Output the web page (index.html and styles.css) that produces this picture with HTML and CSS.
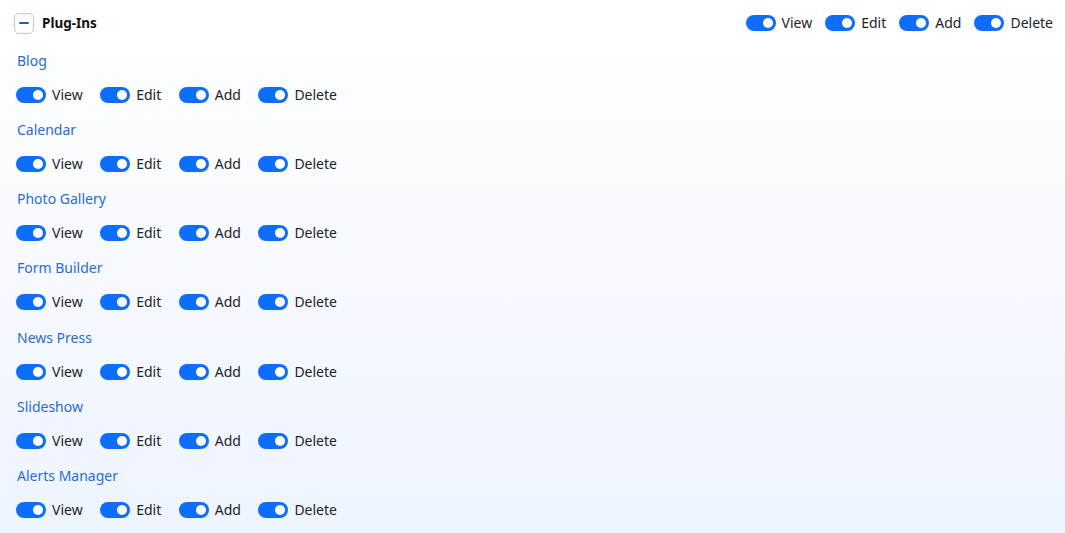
FILE: index.html
```html
<!DOCTYPE html>
<html>
<head>
<meta charset="utf-8">
<link rel="stylesheet" href="styles.css">
</head>
<body>
<div class="panel">
  <div class="header">
    <div class="head-left">
      <span class="collapse"><span class="minus"></span></span>
      <span class="head-title">Plug-Ins</span>
    </div>
    <div class="perms perms-head">
      <label class="perm"><span class="switch"></span><span>View</span></label>
      <label class="perm"><span class="switch"></span><span>Edit</span></label>
      <label class="perm"><span class="switch"></span><span>Add</span></label>
      <label class="perm"><span class="switch"></span><span>Delete</span></label>
    </div>
  </div>
  <div class="list">
    <div class="item">
      <div class="item-title">Blog</div>
      <div class="perms">
        <label class="perm"><span class="switch"></span><span>View</span></label>
        <label class="perm"><span class="switch"></span><span>Edit</span></label>
        <label class="perm"><span class="switch"></span><span>Add</span></label>
        <label class="perm"><span class="switch"></span><span>Delete</span></label>
      </div>
    </div>
    <div class="item">
      <div class="item-title">Calendar</div>
      <div class="perms">
        <label class="perm"><span class="switch"></span><span>View</span></label>
        <label class="perm"><span class="switch"></span><span>Edit</span></label>
        <label class="perm"><span class="switch"></span><span>Add</span></label>
        <label class="perm"><span class="switch"></span><span>Delete</span></label>
      </div>
    </div>
    <div class="item">
      <div class="item-title">Photo Gallery</div>
      <div class="perms">
        <label class="perm"><span class="switch"></span><span>View</span></label>
        <label class="perm"><span class="switch"></span><span>Edit</span></label>
        <label class="perm"><span class="switch"></span><span>Add</span></label>
        <label class="perm"><span class="switch"></span><span>Delete</span></label>
      </div>
    </div>
    <div class="item">
      <div class="item-title">Form Builder</div>
      <div class="perms">
        <label class="perm"><span class="switch"></span><span>View</span></label>
        <label class="perm"><span class="switch"></span><span>Edit</span></label>
        <label class="perm"><span class="switch"></span><span>Add</span></label>
        <label class="perm"><span class="switch"></span><span>Delete</span></label>
      </div>
    </div>
    <div class="item">
      <div class="item-title">News Press</div>
      <div class="perms">
        <label class="perm"><span class="switch"></span><span>View</span></label>
        <label class="perm"><span class="switch"></span><span>Edit</span></label>
        <label class="perm"><span class="switch"></span><span>Add</span></label>
        <label class="perm"><span class="switch"></span><span>Delete</span></label>
      </div>
    </div>
    <div class="item">
      <div class="item-title">Slideshow</div>
      <div class="perms">
        <label class="perm"><span class="switch"></span><span>View</span></label>
        <label class="perm"><span class="switch"></span><span>Edit</span></label>
        <label class="perm"><span class="switch"></span><span>Add</span></label>
        <label class="perm"><span class="switch"></span><span>Delete</span></label>
      </div>
    </div>
    <div class="item">
      <div class="item-title">Alerts Manager</div>
      <div class="perms">
        <label class="perm"><span class="switch"></span><span>View</span></label>
        <label class="perm"><span class="switch"></span><span>Edit</span></label>
        <label class="perm"><span class="switch"></span><span>Add</span></label>
        <label class="perm"><span class="switch"></span><span>Delete</span></label>
      </div>
    </div>
  </div>
</div>
</body>
</html>
```
FILE: styles.css
```css
html, body {
  margin: 0;
  padding: 0;
}
body {
  width: 1065px;
  height: 533px;
  overflow: hidden;
  font-family: "Noto Sans", "Open Sans", sans-serif;
  font-size: 14px;
  color: #212529;
  background: linear-gradient(180deg, #ffffff 0%, #eef4fe 100%);
}
.panel {
  padding: 13px 12px 0 14px;
}
.header {
  display: flex;
  justify-content: space-between;
  align-items: center;
  height: 20px;
}
.head-left {
  display: flex;
  align-items: center;
  gap: 8px;
}
.collapse {
  box-sizing: border-box;
  width: 20px;
  height: 21px;
  border: 1px solid #b9cbe9;
  border-radius: 5px;
  display: flex;
  align-items: center;
  justify-content: center;
  background: #fff;
}
.minus {
  width: 10px;
  height: 2px;
  background: #1d5bc8;
  border-radius: 1px;
}
.head-title {
  font-weight: 700;
  font-size: 13.5px;
  color: #111;
}
.perms {
  display: flex;
  align-items: center;
  height: 20px;
}
.perm {
  display: flex;
  align-items: center;
  gap: 6px;
  margin-right: 17.5px;
  line-height: 20px;
}
.perms-head .perm {
  margin-right: 0;
  margin-left: 13px;
}
.switch {
  position: relative;
  width: 30px;
  height: 16px;
  border-radius: 8px;
  background: #0d6efd;
  flex: none;
}
.switch::after {
  content: "";
  position: absolute;
  right: 3px;
  top: 3px;
  width: 10px;
  height: 10px;
  border-radius: 50%;
  background: #fff;
}
.list {
  padding: 18px 0 0 2px;
}
.item {
  height: 69.17px;
}
.item-title {
  line-height: 20px;
  height: 20px;
  margin-bottom: 14px;
  color: #2a6cd0;
  padding-left: 1px;
}
```
